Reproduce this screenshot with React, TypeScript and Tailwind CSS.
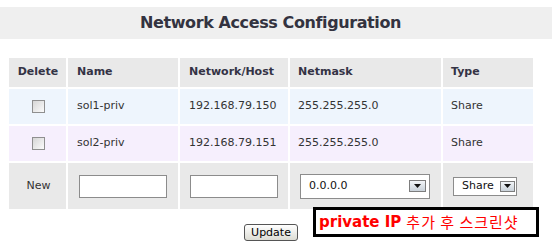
import React from "react";

function Checkbox() {
  return (
    <div className="w-[13px] h-[13px] border border-[#8f8f8f] bg-gradient-to-br from-[#d6d6d6] to-[#fbfbfb]" />
  );
}

function Arrow({ className }: { className: string }) {
  return (
    <div className={"flex items-center justify-center border border-[#7d7d7d] bg-gradient-to-b from-[#f2f5f8] to-[#c9d2da] " + className}>
      <svg width="7" height="4" viewBox="0 0 7 4">
        <path d="M0 0h7L3.5 4z" fill="#111" />
      </svg>
    </div>
  );
}

export default function App() {
  const th = "flex items-center pl-[9px] font-bold text-[#343345] bg-[#e9e9e9]";
  const r1 = "flex items-center pl-[9px] text-[#333] bg-[#eef5fd]";
  const r2 = "flex items-center pl-[9px] text-[#333] bg-[#f6effd]";
  const nw = "flex items-center bg-[#e9e9e9]";
  return (
    <div
      className="relative w-[552px] h-[251px] bg-white overflow-hidden text-[11px]"
      style={{ fontFamily: '"DejaVu Sans", Verdana, sans-serif' }}
    >
      <div className="pt-[7px]">
        <div className="h-[32px] bg-[#efefef] flex items-center justify-center pr-[11px]">
          <span className="text-[16px] font-bold tracking-[-0.4px] text-[#333340]">
            Network Access Configuration
          </span>
        </div>
      </div>
      <div className="w-[540px]">
        <div className="ml-[9px] mt-[19px] grid grid-cols-[57px_110px_108px_151px_90px] grid-rows-[29px_35px_35px_46px] gap-[2px]">
          <div className={th + " justify-center !pl-[1px]"}>Delete</div>
          <div className={th}>Name</div>
          <div className={th}>Network/Host</div>
          <div className={th + " !pl-[8px]"}>Netmask</div>
          <div className={th + " !pl-[8px]"}>Type</div>

          <div className={r1 + " justify-center !pl-[2px]"}>
            <Checkbox />
          </div>
          <div className={r1}>sol1-priv</div>
          <div className={r1}>192.168.79.150</div>
          <div className={r1 + " !pl-[8px]"}>255.255.255.0</div>
          <div className={r1 + " !pl-[8px]"}>Share</div>

          <div className={r2 + " justify-center !pl-[2px]"}>
            <Checkbox />
          </div>
          <div className={r2}>sol2-priv</div>
          <div className={r2}>192.168.79.151</div>
          <div className={r2 + " !pl-[8px]"}>255.255.255.0</div>
          <div className={r2 + " !pl-[8px]"}>Share</div>

          <div className={nw + " justify-center pl-[2px] text-[#333]"}>New</div>
          <div className={nw + " pl-[11px]"}>
            <div className="w-[88px] h-[23px] bg-white border border-[#8c8c8c]" />
          </div>
          <div className={nw + " pl-[10px]"}>
            <div className="w-[88px] h-[23px] bg-white border border-[#8c8c8c]" />
          </div>
          <div className={nw + " pl-[10px]"}>
            <div className="w-[130px] h-[25px] bg-white border border-[#8c8c8c] flex items-center pl-[8px] pr-[3px] text-[#111]">
              <span className="flex-1">0.0.0.0</span>
              <Arrow className="w-[17px] h-[12px]" />
            </div>
          </div>
          <div className={nw + " pl-[10px]"}>
            <div className="w-[64px] h-[19px] bg-white border border-[#8c8c8c] flex items-center pl-[8px] pr-[1px] text-[#111]">
              <span className="flex-1">Share</span>
              <Arrow className="w-[15px] h-[11px]" />
            </div>
          </div>
        </div>
        <div className="mt-[15px] flex justify-center pl-[2px]">
          <button className="w-[54px] h-[17px] rounded-[3px] border border-[#555] bg-gradient-to-b from-[#ffffff] to-[#dcdcd4] text-[11px] leading-none text-black flex items-center justify-center">
            Update
          </button>
        </div>
      </div>
      <div className="absolute left-[313px] top-[207px] w-[226px] h-[30px] border-[3px] border-black bg-white flex items-center pl-[3px] text-[15px] text-[#ff0000] whitespace-nowrap">
        <span className="font-bold">private IP</span>
        <span
          className="ml-[5px] tracking-[1px]"
          style={{ fontFamily: '"Noto Sans CJK KR", sans-serif' }}
        >
          추가 후 스크린샷
        </span>
      </div>
    </div>
  );
}
